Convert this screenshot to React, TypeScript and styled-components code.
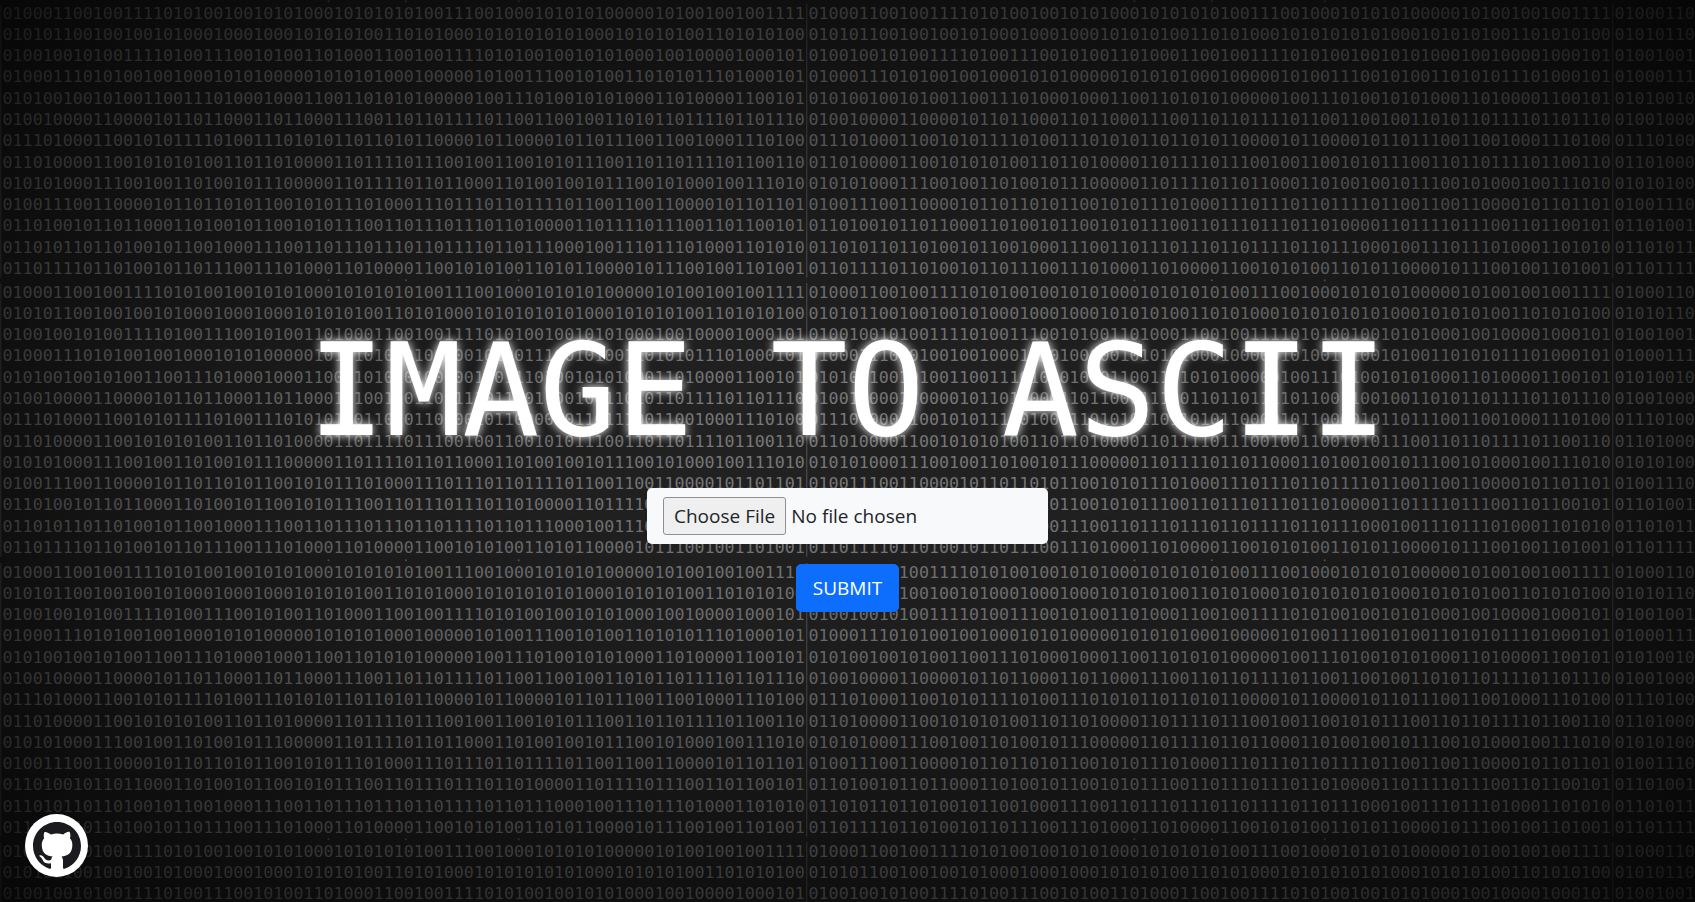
import React from "react";
import styled, { createGlobalStyle } from "styled-components";

const PHRASES = [
  "FORTUNEPRO",
  "VIDESQUEST",
  "IONSFORTHE",
  "GREATANSWE",
  "RS:#5A:The",
  "HallsofMon",
  "tezumaandt",
  "heShoresof",
  "Tripoli.Q:",
  "Nametwofam",
  "ilieswhose",
  "kidswon'tj",
  "ointheMari",
];

const toBinary = (text: string) =>
  Array.from(text)
    .map((c) => c.charCodeAt(0).toString(2).padStart(8, "0"))
    .join("");

const ROWS = PHRASES.map(toBinary);
const TILE_COUNT = 12;
const SPECKS = [3350, 4140, 5290];

const GlobalStyle = createGlobalStyle`
  *, *::before, *::after { box-sizing: border-box; }
  body {
    margin: 0;
    background: #212121;
    font-family: "Open Sans", "Noto Sans", sans-serif;
  }
`;

const Page = styled.div`
  position: relative;
  min-height: 100vh;
  display: flex;
  flex-direction: column;
  justify-content: center;
  overflow: hidden;
`;

const Backdrop = styled.div`
  position: absolute;
  inset: 0;
  overflow: hidden;
  user-select: none;

  &::after {
    content: "";
    position: absolute;
    inset: 0;
    background:
      linear-gradient(
        to right,
        rgba(0, 0, 0, 0.54) 0%,
        rgba(0, 0, 0, 0.32) 9%,
        rgba(0, 0, 0, 0.14) 22%,
        rgba(0, 0, 0, 0) 42%,
        rgba(0, 0, 0, 0) 58%,
        rgba(0, 0, 0, 0.14) 78%,
        rgba(0, 0, 0, 0.36) 91%,
        rgba(0, 0, 0, 0.6) 100%
      ),
      linear-gradient(
        to bottom,
        rgba(0, 0, 0, 0.56) 0%,
        rgba(0, 0, 0, 0.32) 14%,
        rgba(0, 0, 0, 0.1) 30%,
        rgba(0, 0, 0, 0) 45%,
        rgba(0, 0, 0, 0) 55%,
        rgba(0, 0, 0, 0.1) 70%,
        rgba(0, 0, 0, 0.32) 86%,
        rgba(0, 0, 0, 0.56) 100%
      );
  }
`;

const TileWall = styled.div`
  display: grid;
  grid-template-columns: repeat(3, 806px);
`;

const TileDrawing = styled.svg`
  display: block;
  width: 100%;
  fill: #777;
  font-family: "DejaVu Sans Mono", monospace;
  font-size: 170px;
`;

const BinaryTile = () => (
  <TileDrawing viewBox="0 0 8220 2850">
    <rect x="0" y="42" width="14" height="2790" fill="#484848" />
    {SPECKS.map((x) => (
      <circle key={x} cx={x} cy="12" r="10" fill="#606060" />
    ))}
    {ROWS.map((row, i) => (
      <text key={row} x="26" y={190 + i * 217}>
        {row}
      </text>
    ))}
  </TileDrawing>
);

const Content = styled.main`
  position: relative;
  display: flex;
  flex-direction: column;
  align-items: center;
  gap: 20px;
  padding-top: 24px;
`;

const Title = styled.h1`
  margin: 0;
  color: #fff;
  font: 400 128px/154px "DejaVu Sans Mono", monospace;
  text-align: center;
  text-shadow: 0 0 10px #fff;
`;

const Form = styled.form`
  display: flex;
  flex-direction: column;
  align-items: center;
  gap: 20px;
`;

const FileField = styled.input`
  width: 401px;
  max-width: 100%;
  padding: 9px 16px;
  border: 0;
  border-radius: 5px;
  background: #f8f9fa;
  color: #212529;
  font: 19px/30px "Open Sans", "Noto Sans", sans-serif;

  &::file-selector-button {
    margin: 0 5px 0 0;
    padding: 3px 10px;
    border: 1px solid #8f8f8f;
    border-radius: 3px;
    background: #efefef;
    color: #212529;
    font: inherit;
  }
`;

const SubmitButton = styled.button`
  padding: 8px 16px;
  border: 1px solid #0d6efd;
  border-radius: 5px;
  background: #0d6efd;
  color: #fff;
  font: 19px/30px "Open Sans", "Noto Sans", sans-serif;
`;

const RepoLink = styled.a`
  position: fixed;
  left: 25px;
  bottom: 25px;
  display: flex;
  align-items: center;
  justify-content: center;
  width: 63px;
  height: 63px;
  border-radius: 50%;
  background: #fff;
`;

const GithubMark = () => (
  <svg width="48" height="48" viewBox="0 0 16 16" fill="#1b1a1e" aria-hidden="true">
    <path d="M8 0C3.58 0 0 3.58 0 8c0 3.54 2.29 6.53 5.47 7.59.4.07.55-.17.55-.38 0-.19-.01-.82-.01-1.49-2.01.37-2.53-.49-2.69-.94-.09-.23-.48-.94-.82-1.13-.28-.15-.68-.52-.01-.53.63-.01 1.08.58 1.23.82.72 1.21 1.87.87 2.33.66.07-.52.28-.87.51-1.07-1.78-.2-3.64-.89-3.64-3.95 0-.87.31-1.59.82-2.15-.08-.2-.36-1.02.08-2.12 0 0 .67-.21 2.2.82.64-.18 1.32-.27 2-.27s1.36.09 2 .27c1.53-1.04 2.2-.82 2.2-.82.44 1.1.16 1.92.08 2.12.51.56.82 1.27.82 2.15 0 3.07-1.87 3.75-3.65 3.95.29.25.54.73.54 1.48 0 1.07-.01 1.93-.01 2.2 0 .21.15.46.55.38A8.01 8.01 0 0 0 16 8c0-4.42-3.58-8-8-8z" />
  </svg>
);

export default function App() {
  return (
    <Page>
      <GlobalStyle />
      <Backdrop aria-hidden="true">
        <TileWall>
          {Array.from({ length: TILE_COUNT }, (_, i) => (
            <BinaryTile key={i} />
          ))}
        </TileWall>
      </Backdrop>
      <Content>
        <Title>IMAGE TO ASCII</Title>
        <Form onSubmit={(e) => e.preventDefault()}>
          <FileField type="file" accept="image/*" aria-label="Image file" />
          <SubmitButton type="submit">SUBMIT</SubmitButton>
        </Form>
      </Content>
      <RepoLink href="https://github.com" aria-label="GitHub repository">
        <GithubMark />
      </RepoLink>
    </Page>
  );
}
